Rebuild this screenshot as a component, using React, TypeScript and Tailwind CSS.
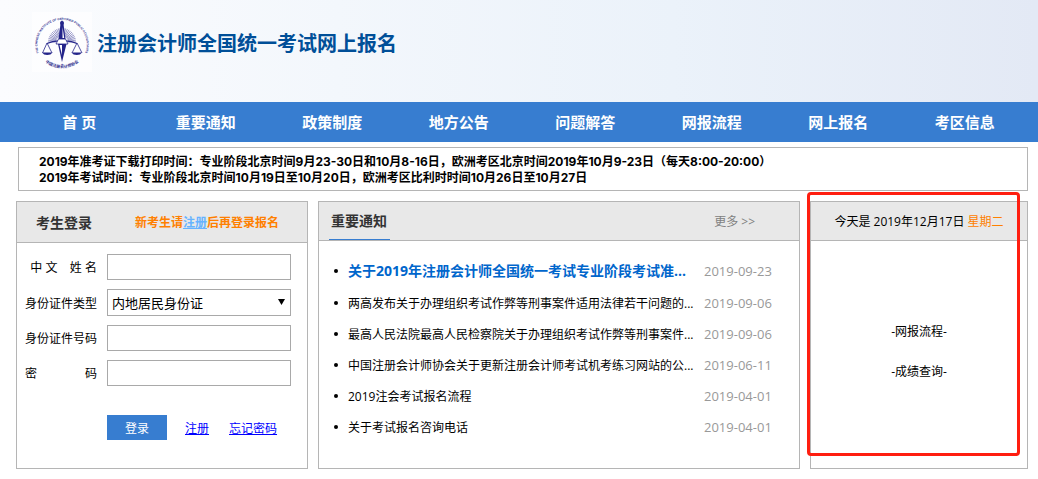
import React, { useState } from "react";

interface Notice {
  title: string;
  date: string;
}

const navItems = [
  "首 页",
  "重要通知",
  "政策制度",
  "地方公告",
  "问题解答",
  "网报流程",
  "网上报名",
  "考区信息",
];

const topNotice: Notice = {
  title: "关于2019年注册会计师全国统一考试专业阶段考试准...",
  date: "2019-09-23",
};

const notices: Notice[] = [
  {
    title: "两高发布关于办理组织考试作弊等刑事案件适用法律若干问题的...",
    date: "2019-09-06",
  },
  {
    title: "最高人民法院最高人民检察院关于办理组织考试作弊等刑事案件...",
    date: "2019-09-06",
  },
  {
    title: "中国注册会计师协会关于更新注册会计师考试机考练习网站的公...",
    date: "2019-06-11",
  },
  { title: "2019注会考试报名流程", date: "2019-04-01" },
  { title: "关于考试报名咨询电话", date: "2019-04-01" },
];

// rays of the half sun behind the scales
const rays = Array.from({ length: 25 }, (_, i) => {
  const angle = Math.PI + (i * Math.PI) / 24;
  return {
    x1: 30 + 6 * Math.cos(angle),
    y1: 30 + 6 * Math.sin(angle),
    x2: 30 + 14 * Math.cos(angle),
    y2: 30 + 14 * Math.sin(angle),
  };
});

const Logo = () => (
  <svg width="60" height="60" viewBox="0 0 60 60" className="bg-white/60">
    <defs>
      <path id="arcTop" d="M 8 43.5 A 24.6 24.6 0 1 1 52 43.5" />
      <path id="arcBottom" d="M 11.5 48.5 A 26 26 0 0 0 48.5 48.5" />
    </defs>
    <g fill="#2b2a8c" fontFamily="Liberation Sans, sans-serif" fontWeight="bold">
      <text fontSize="3">
        <textPath href="#arcTop" startOffset="50%" textAnchor="middle">
          THE CHINESE INSTITUTE OF CERTIFIED PUBLIC ACCOUNTANTS
        </textPath>
      </text>
      <text fontSize="4" fontFamily="Noto Sans CJK SC, sans-serif">
        <textPath href="#arcBottom" startOffset="50%" textAnchor="middle">
          中国注册会计师协会
        </textPath>
      </text>
    </g>
    <g stroke="#6b6bb0" strokeWidth="0.7">
      {rays.map((ray, index) => (
        <line key={index} {...ray} />
      ))}
    </g>
    <g fill="none" stroke="#24248a" strokeWidth="0.8">
      <path d="M15 31.5 Q22 28 30 29 Q38 28 45 31.5" strokeWidth="1.2" />
      <path d="M15 31 L10.5 41 M15 31 L20 41 M45 31 L40 41 M45 31 L50 41" />
      <path d="M26.5 27 L33.5 27 L36 32 L24 32 Z" fill="#fff" />
    </g>
    <g fill="#24248a">
      <path d="M10 40.5 H20.5 Q19 43 15.2 43 Q11.5 43 10 40.5 Z" />
      <path d="M39.5 40.5 H50 Q48.5 43 44.8 43 Q41 43 39.5 40.5 Z" />
      <path d="M30 8 L31.5 12 L33.5 27 H26.5 L28.5 12 Z" />
      <path d="M30.5 15 L32.2 26 H30.5 Z" fill="#fff" />
      <path d="M26 32 H34.5 L30 50 Z" />
      <path d="M27.5 33 H30 V43 Z" fill="#fff" />
      <circle cx="30" cy="11" r="2" />
    </g>
  </svg>
);

const inputStyle =
  "w-full border border-[#a9a9a9] bg-white px-1 text-[13px] outline-none";

const LoginPanel = () => {
  const [idType, setIdType] = useState("内地居民身份证");
  const [name, setName] = useState("");
  const [idNumber, setIdNumber] = useState("");
  const [password, setPassword] = useState("");

  return (
    <section className="border border-[#b5b5b5]">
      <div className="flex h-[41px] items-center justify-between border-b border-[#b5b5b5] bg-[#e8e8e8] pl-[19px] pr-7 pt-px">
        <h2 className="text-sm font-bold text-[#333]">考生登录</h2>
        <p className="font-bold text-[#ff8000]">
          新考生请
          <a href="#register" className="text-[#66b3ff] underline">
            注册
          </a>
          后再登录报名
        </p>
      </div>
      <form
        className="pl-2 pr-4 pt-[11px]"
        onSubmit={(e) => e.preventDefault()}
      >
        <div className="grid grid-cols-[72px_1fr] items-center gap-x-[10px] gap-y-[9px]">
          <label htmlFor="name" className="whitespace-pre pt-[2px] text-right">
            {"中 文    姓 名"}
          </label>
          <input
            id="name"
            className={`${inputStyle} h-[26px]`}
            value={name}
            onChange={(e) => setName(e.target.value)}
          />
          <label htmlFor="idType" className="pt-[2px]">
            身份证件类型
          </label>
          <div className="relative">
            <select
              id="idType"
              className={`${inputStyle} block h-[27px] appearance-none`}
              value={idType}
              onChange={(e) => setIdType(e.target.value)}
            >
              <option>内地居民身份证</option>
            </select>
            <svg
              className="pointer-events-none absolute right-[6px] top-[10px]"
              width="7"
              height="6"
              viewBox="0 0 7 6"
            >
              <path d="M0 0 H7 L3.5 6 Z" />
            </svg>
          </div>
          <label htmlFor="idNumber" className="pt-[2px]">
            身份证件号码
          </label>
          <input
            id="idNumber"
            className={`${inputStyle} h-[26px]`}
            value={idNumber}
            onChange={(e) => setIdNumber(e.target.value)}
          />
          <label htmlFor="password" className="flex justify-between pt-[2px]">
            <span>密</span>
            <span>码</span>
          </label>
          <input
            id="password"
            type="password"
            className={`${inputStyle} h-[26px]`}
            value={password}
            onChange={(e) => setPassword(e.target.value)}
          />
        </div>
        <div className="mt-[29px] flex items-center pl-[82px]">
          <button
            type="submit"
            className="h-[25px] w-[60px] bg-[#377dd0] pt-[2px] text-white"
          >
            登录
          </button>
          <a
            href="#register"
            className="ml-[18px] pt-[2px] text-[#0000ff] underline"
          >
            注册
          </a>
          <a href="#forgot" className="ml-5 pt-[2px] text-[#0000ff] underline">
            忘记密码
          </a>
        </div>
      </form>
    </section>
  );
};

const NoticePanel = () => (
  <section className="min-w-0 border border-[#b5b5b5]">
    <div className="flex h-[39px] items-stretch justify-between border-b border-[#b5b5b5] bg-[#e8e8e8] pl-[10px] pr-11">
      <h2 className="flex items-center border-b border-[#377dd0] pl-[2px] pr-[3px] text-sm font-bold text-[#333]">
        重要通知
      </h2>
      <a href="#more" className="flex items-center pt-[2px] text-[#808080]">
        更多 &gt;&gt;
      </a>
    </div>
    <ul className="pl-[15px] pr-7 pt-[14px]">
      <li className="flex h-8 items-center">
        <span className="mr-[10px] size-1 shrink-0 rounded-full bg-black" />
        <a
          href="#notice"
          className="min-w-0 flex-1 truncate text-sm font-bold text-[#0066cc]"
        >
          {topNotice.title}
        </a>
        <span className="w-[67px] whitespace-nowrap text-[13px] text-[#999]">
          {topNotice.date}
        </span>
      </li>
      {notices.map((notice, index) => (
        <li key={index} className="flex h-[31px] items-center">
          <span className="mr-[10px] size-1 shrink-0 rounded-full bg-black" />
          <a href="#notice" className="min-w-0 flex-1 truncate pt-[2px]">
            {notice.title}
          </a>
          <span className="w-[67px] whitespace-nowrap text-[13px] text-[#999]">
            {notice.date}
          </span>
        </li>
      ))}
    </ul>
  </section>
);

const DatePanel = () => (
  <section className="relative border border-[#b5b5b5]">
    <div className="flex h-[39px] items-center justify-center border-b border-[#b5b5b5] bg-[#e8e8e8] pt-[2px]">
      <p>
        今天是 2019年12月17日 <span className="text-[#ff8000]">星期二</span>
      </p>
    </div>
    <div className="flex flex-col items-center gap-6 pt-[83px]">
      <a href="#process">-网报流程-</a>
      <a href="#score">-成绩查询-</a>
    </div>
    <div className="pointer-events-none absolute -left-1 -top-[10px] bottom-3 right-[7px] rounded-sm border-3 border-[#ff1e10]" />
  </section>
);

const App = () => {
  return (
    <div className="bg-white font-['Open_Sans','Noto_Sans_CJK_SC',sans-serif] text-xs leading-4 text-black">
      <header className="flex h-[102px] items-start bg-linear-to-r from-[#fbfcfe] via-[#ebf2fa] via-65% to-[#e3e9f5] pl-8 pt-3">
        <Logo />
        <h1 className="ml-[5px] mt-4 text-xl leading-8 font-bold text-[#004f98]">
          注册会计师全国统一考试网上报名
        </h1>
      </header>
      <nav className="grid h-10 grid-cols-8 items-center bg-[#377dd0] pl-4 pr-[10px] text-center text-[15px] font-bold text-white">
        {navItems.map((item) => (
          <a key={item} href="#nav">
            {item}
          </a>
        ))}
      </nav>
      <div className="ml-[18px] mr-[10px] mt-[5px] border border-[#b5b5b5] pb-1 pl-5 pt-[6px] font-['Inter','Noto_Sans_CJK_SC',sans-serif] font-bold">
        <p>
          2019年准考证下载打印时间：专业阶段北京时间9月23-30日和10月8-16日，欧洲考区北京时间2019年10月9-23日（每天8:00-20:00）
        </p>
        <p>
          2019年考试时间：专业阶段北京时间10月19日至10月20日，欧洲考区比利时时间10月26日至10月27日
        </p>
      </div>
      <main className="ml-4 mr-[10px] mt-[10px] grid min-h-[268px] grid-cols-[292px_1fr_218px] gap-[10px]">
        <LoginPanel />
        <NoticePanel />
        <DatePanel />
      </main>
    </div>
  );
};

export default App;
